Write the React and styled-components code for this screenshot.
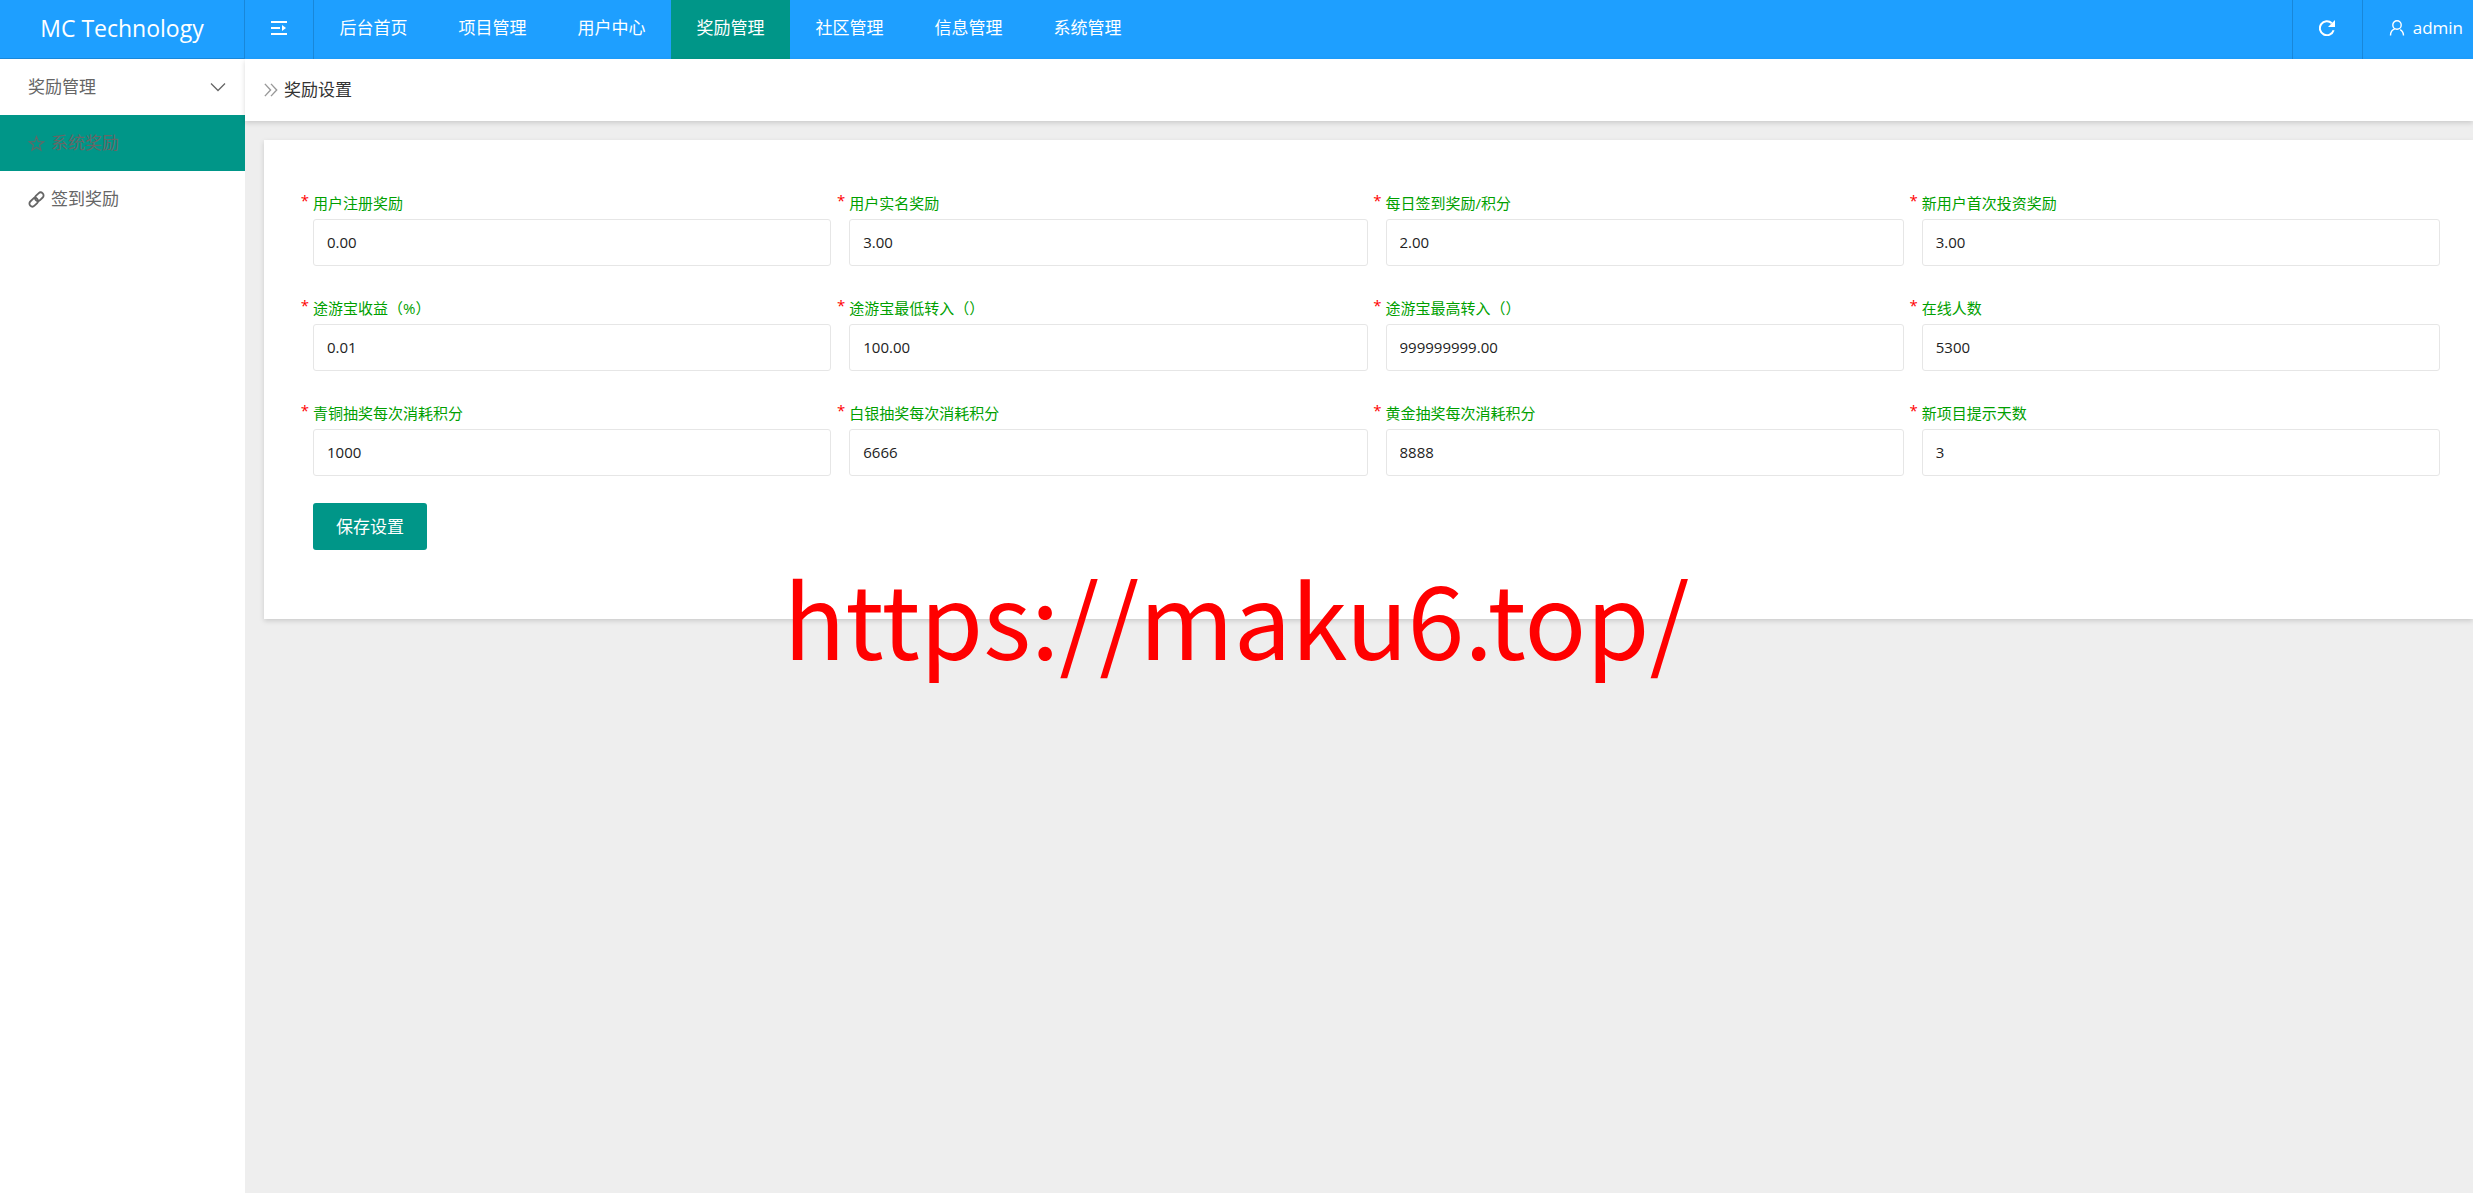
import React from 'react'
import styled, {createGlobalStyle} from 'styled-components'

const GlobalStyle = createGlobalStyle`
  * {
    box-sizing: border-box;
  }
  body {
    margin: 0;
    background-color: #eee;
    color: #333;
    font-family: 'Open Sans', 'Noto Sans CJK SC', sans-serif;
    font-size: 17px;
    line-height: 24px;
  }
  a {
    color: inherit;
    text-decoration: none;
  }
`

const Page = styled.div`
  display: flex;
  flex-direction: column;
  min-height: 100vh;
`

const Header = styled.header`
  display: flex;
  height: 59px;
  background-color: #1e9fff;
  color: #fff;
`

const Logo = styled.a`
  display: flex;
  align-items: center;
  justify-content: center;
  width: 245px;
  padding-bottom: 3px;
  border-right: 1px solid rgba(0, 0, 0, 0.15);
  border-bottom: 1px solid rgba(0, 0, 0, 0.15);
  font-size: 23px;
`

const IconButton = styled.button`
  display: flex;
  align-items: center;
  justify-content: center;
  width: ${props => props.$width}px;
  padding: 0 0 3px;
  border: 0;
  border-right: 1px solid rgba(0, 0, 0, 0.15);
  background: none;
  color: inherit;
`

const Nav = styled.nav`
  display: flex;
  flex: 1;
`

const NavLink = styled.a`
  display: flex;
  align-items: center;
  justify-content: center;
  width: 119px;
  padding-bottom: 3px;
  background-color: ${props => (props.$active ? '#009688' : 'transparent')};
`

const Tools = styled.div`
  display: flex;
  border-left: 1px solid rgba(0, 0, 0, 0.15);
`

const User = styled.a`
  display: flex;
  align-items: center;
  gap: 8px;
  padding: 0 10px 3px 26px;
`

const Body = styled.div`
  display: flex;
  flex: 1;
`

const Side = styled.aside`
  width: 245px;
  background-color: #fff;
  color: #666;
`

const SideLink = styled.a`
  display: flex;
  align-items: center;
  gap: 6px;
  height: 56px;
  padding: 0 19px 0 28px;
  background-color: ${props => (props.$active ? '#009688' : 'transparent')};
`

const SideTitle = styled(SideLink)`
  justify-content: space-between;
`

const Main = styled.main`
  flex: 1;
  min-width: 0;
`

const Crumb = styled.div`
  display: flex;
  align-items: center;
  gap: 6px;
  height: 62px;
  padding-left: 19px;
  background-color: #fff;
  box-shadow: 0 2px 5px rgba(0, 0, 0, 0.15);
`

const Card = styled.form`
  margin: 19px 0 0 19px;
  padding: 51px 33px 69px 49px;
  background-color: #fff;
  box-shadow: 0 2px 5px rgba(0, 0, 0, 0.15);
`

const Grid = styled.div`
  display: grid;
  grid-template-columns: repeat(4, 1fr);
  gap: 30px 18px;
`

const Field = styled.div`
  display: flex;
  flex-direction: column;
  gap: 4px;
`

const Label = styled.label`
  position: relative;
  color: #009f00;
  font-size: 15px;
`

const Star = styled.span`
  position: absolute;
  top: -3px;
  right: 100%;
  margin-right: 4px;
  color: #f00;
`

const Input = styled.input`
  width: 100%;
  height: 47px;
  padding: 0 13px 2px;
  border: 1px solid #e6e6e6;
  border-radius: 3px;
  background-color: #fff;
  color: #222;
  font-family: inherit;
  font-size: 15px;
`

const Save = styled.button`
  height: 47px;
  margin-top: 27px;
  padding: 0 23px 2px;
  border: 0;
  border-radius: 3px;
  background-color: #009688;
  color: #fff;
  font-family: inherit;
  font-size: 17px;
`

const Watermark = styled.div`
  position: absolute;
  top: 565px;
  left: 0;
  right: 0;
  color: #f00;
  font-family: 'Noto Sans CJK SC', sans-serif;
  font-size: 102px;
  line-height: 102px;
  text-align: center;
  pointer-events: none;
`

const Svg = ({size = 16, width = 1, children}) => (
  <svg
    width={size}
    height={size}
    viewBox='0 0 16 16'
    fill='none'
    stroke='currentColor'
    strokeWidth={width}
    aria-hidden='true'
  >
    {children}
  </svg>
)

const Shrink = () => (
  <Svg width={2}>
    <path d='M0 2h16M0 8h9M0 14h16' />
    <path d='M11 5l4 3-4 3z' fill='currentColor' stroke='none' />
  </Svg>
)

const Refresh = () => (
  <Svg width={2}>
    <path d='M14.6 10.3A7 7 0 1 1 12.8 3.2' />
    <path d='M16 0v7H9z' fill='currentColor' stroke='none' />
  </Svg>
)

const Person = () => (
  <Svg width={1.4}>
    <circle cx='8' cy='5' r='4.2' />
    <path d='M1.5 15.5c0-3.4 1.8-5.8 4.6-6.8M11.2 9.600c2 1.200 3.300 3.300 3.300 5.900' />
  </Svg>
)

const Down = () => (
  <Svg width={1.3}>
    <path d='M1 4.5l7 7 7-7' />
  </Svg>
)

const StarOutline = () => (
  <Svg size={17}>
    <path d='M8 1.500l1.700 4.800h5.100l-4 3.100 1.400 5L8 11.500l-4.200 2.900 1.400-5-4-3.100h5.100z' />
  </Svg>
)

const Chain = () => (
  <Svg size={17} width={1.7}>
    <rect x='-4.6' y='-2.8' width='9.2' height='5.6' rx='2.8' transform='translate(10.6 5.4) rotate(-45)' />
    <rect x='-4.6' y='-2.8' width='9.2' height='5.6' rx='2.8' transform='translate(5.4 10.6) rotate(-45)' />
  </Svg>
)

const Chevrons = () => (
  <Svg size={14} width={1.6}>
    <path d='M1 1l6.5 7L1 15M8 1l6.5 7L8 15' stroke='#999' />
  </Svg>
)

const links = ['后台首页', '项目管理', '用户中心', '奖励管理', '社区管理', '信息管理', '系统管理']

const fields = [
  {id: 'register', label: '用户注册奖励', value: '0.00'},
  {id: 'realname', label: '用户实名奖励', value: '3.00'},
  {id: 'signin', label: '每日签到奖励/积分', value: '2.00'},
  {id: 'first', label: '新用户首次投资奖励', value: '3.00'},
  {id: 'income', label: '途游宝收益（%）', value: '0.01'},
  {id: 'min', label: '途游宝最低转入（）', value: '100.00'},
  {id: 'max', label: '途游宝最高转入（）', value: '999999999.00'},
  {id: 'online', label: '在线人数', value: '5300'},
  {id: 'bronze', label: '青铜抽奖每次消耗积分', value: '1000'},
  {id: 'silver', label: '白银抽奖每次消耗积分', value: '6666'},
  {id: 'gold', label: '黄金抽奖每次消耗积分', value: '8888'},
  {id: 'days', label: '新项目提示天数', value: '3'}
]

const App = () => (
  <Page>
    <GlobalStyle />
    <Header>
      <Logo href='#'>MC Technology</Logo>
      <IconButton type='button' $width={69} aria-label='菜单'><Shrink /></IconButton>
      <Nav>
        {links.map(link => (
          <NavLink key={link} href='#' $active={link === '奖励管理'}>{link}</NavLink>
        ))}
      </Nav>
      <Tools>
        <IconButton type='button' $width={70} aria-label='刷新'><Refresh /></IconButton>
        <User href='#'><Person /> admin</User>
      </Tools>
    </Header>
    <Body>
      <Side>
        <SideTitle href='#'>奖励管理 <Down /></SideTitle>
        <SideLink href='#' $active><StarOutline /> 系统奖励</SideLink>
        <SideLink href='#'><Chain /> 签到奖励</SideLink>
      </Side>
      <Main>
        <Crumb><Chevrons /> 奖励设置</Crumb>
        <Card>
          <Grid>
            {fields.map(({id, label, value}) => (
              <Field key={id}>
                <Label htmlFor={id}><Star>*</Star>{label}</Label>
                <Input id={id} type='text' defaultValue={value} />
              </Field>
            ))}
          </Grid>
          <Save type='button'>保存设置</Save>
        </Card>
      </Main>
    </Body>
    <Watermark>https://maku6.top/</Watermark>
  </Page>
)

export default App
